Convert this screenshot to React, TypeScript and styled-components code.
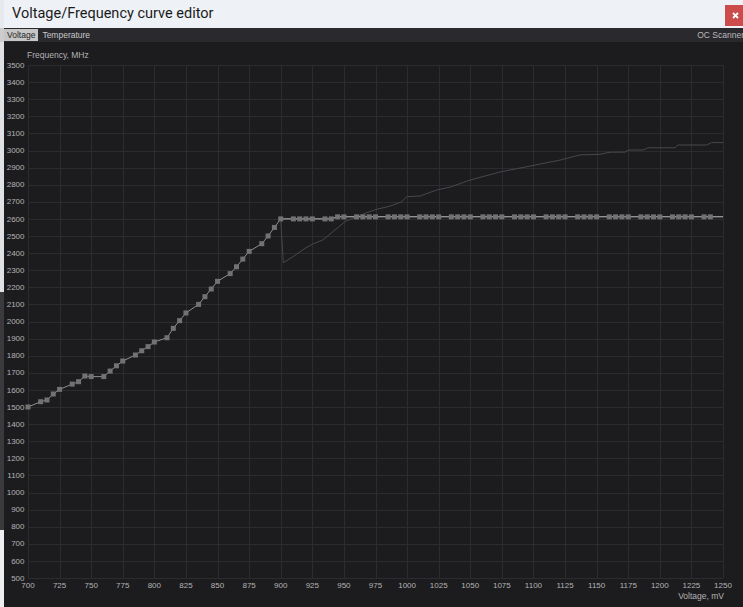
import React from 'react';
import styled, { createGlobalStyle } from 'styled-components';

const GlobalStyle = createGlobalStyle`
  html, body {
    margin: 0;
    padding: 0;
    background: #1c1c1f;
    overflow: hidden;
  }
  #root {
    width: 743px;
    height: 607px;
  }
`;

// ---- data ----------------------------------------------------------------

const VMIN = 700;
const VMAX = 1250;
const FMIN = 500;
const FMAX = 3500;

// plot box inside the svg
const PL = 24;
const PT = 5;
const PW = 695;
const PH = 513;

const sx = (v: number) => PL + ((v - VMIN) / (VMAX - VMIN)) * PW;
const sy = (f: number) => PT + ((FMAX - f) / (FMAX - FMIN)) * PH;
const crisp = (n: number) => Math.round(n) + 0.5;

const risingPoints: [number, number][] = [
  [700, 1500], [710, 1531], [715, 1541], [720, 1576], [725, 1603],
  [735, 1634], [740, 1648], [745, 1681], [750, 1678], [760, 1678],
  [765, 1710], [770, 1741], [775, 1769], [785, 1804], [790, 1829],
  [795, 1853], [800, 1880], [810, 1905], [815, 1960], [820, 2005],
  [825, 2050], [835, 2100], [840, 2145], [845, 2190], [850, 2235],
  [860, 2280], [865, 2320], [870, 2365], [875, 2410], [885, 2455],
  [890, 2500], [895, 2550], [900, 2600],
];

const flatPoints: [number, number][] = (() => {
  const pts: [number, number][] = [];
  for (let v = 910; v <= 1240; v += 5) {
    if (v % 25 === 5) continue;
    pts.push([v, v < 945 ? 2600 : 2612]);
  }
  return pts;
})();

const dimCurve: [number, number][] = [
  [900, 2600], [902, 2344], [909.7, 2379], [919.2, 2428], [925.5, 2453],
  [933.4, 2477], [941.3, 2525], [950.9, 2584], [957.2, 2604], [968, 2636],
  [976, 2656], [986.5, 2675], [995.7, 2700], [999.7, 2730], [1010.2, 2734],
  [1023.4, 2769], [1034, 2786], [1049.8, 2827], [1073.5, 2874],
  [1097.3, 2909], [1121, 2944], [1136.8, 2974], [1152.6, 2978],
  [1160.6, 2990], [1172.5, 2990], [1175, 3003], [1186.7, 3003],
  [1190.6, 3016], [1212, 3016], [1214.4, 3032], [1237, 3032],
  [1241, 3046], [1250, 3046],
];

const toPath = (pts: [number, number][]) =>
  pts.map(([v, f]) => `${sx(v).toFixed(1)},${sy(f).toFixed(1)}`).join(' ');

const freqTicks = Array.from({ length: 31 }, (_, i) => FMIN + i * 100);
const voltTicks = Array.from({ length: 23 }, (_, i) => VMIN + i * 25);

// ---- layout ----------------------------------------------------------------

const Screen = styled.div`
  display: flex;
  width: 743px;
  height: 607px;
  overflow: hidden;
`;

const BehindEdge = styled.div`
  width: 4px;
  flex-shrink: 0;
  background: linear-gradient(
    to bottom,
    #e6e9ed 0px,
    #e6e9ed 28px,
    #cdcdcd 28px,
    #cdcdcd 42px,
    #dfe1e4 42px,
    #dfe1e4 292px,
    #3a3a3d 292px,
    #3a3a3d 530px,
    #eceef0 530px
  );
`;

const Window = styled.div`
  flex: 1;
  min-width: 0;
  display: flex;
  flex-direction: column;
  background: #1c1c1f;
`;

const TitleBar = styled.div`
  height: 28px;
  flex-shrink: 0;
  display: flex;
  align-items: flex-start;
  justify-content: space-between;
  background: #eef1f5;
  padding-left: 8px;
`;

const Title = styled.div`
  font-family: Roboto, 'Liberation Sans', sans-serif;
  font-size: 14.5px;
  line-height: 27px;
  color: #1b1b1b;
`;

const CloseButton = styled.div`
  width: 21px;
  height: 21px;
  margin-top: 5px;
  margin-right: -3px;
  background: #cc4b4b;
  display: flex;
  align-items: center;
  justify-content: center;
`;

const TabBar = styled.div`
  height: 14px;
  flex-shrink: 0;
  display: flex;
  align-items: center;
  gap: 1px;
  background: #2a2a2e;
  font-family: 'Liberation Sans', Arial, sans-serif;
  font-size: 8.5px;
`;

const Tab = styled.div<{ $active?: boolean }>`
  height: 12px;
  line-height: 12px;
  padding: 0 3px;
  background: ${(p) => (p.$active ? '#c6c6c6' : 'transparent')};
  color: ${(p) => (p.$active ? '#1f1f1f' : '#c9c9c9')};
`;

const ScannerLink = styled.div`
  margin-left: auto;
  margin-right: -1px;
  white-space: nowrap;
  color: #b9b9b9;
  line-height: 12px;
`;

const ChartArea = styled.div`
  flex: 1;
  display: flex;
  flex-direction: column;
  font-family: 'Liberation Sans', Arial, sans-serif;
  color: #b3b3b3;
`;

const AxisTitle = styled.div<{ $align: 'left' | 'right' }>`
  font-size: 8.5px;
  line-height: 10px;
  height: 10px;
  text-align: ${(p) => p.$align};
  padding: ${(p) => (p.$align === 'left' ? '8px 0 0 23px' : '0 19px 0 0')};
`;

const ChartSvg = styled.svg`
  display: block;
  width: 739px;
  height: 531px;
  flex-shrink: 0;
`;

const CurveChart = () => (
  <ChartSvg viewBox="0 0 739 531">
    {freqTicks.map((f) => (
      <line
        key={`h${f}`}
        x1={PL}
        x2={PL + PW}
        y1={crisp(sy(f))}
        y2={crisp(sy(f))}
        stroke="#2c2c30"
        strokeWidth={1}
      />
    ))}
    {voltTicks.map((v) => (
      <line
        key={`v${v}`}
        x1={crisp(sx(v))}
        x2={crisp(sx(v))}
        y1={PT}
        y2={PT + PH}
        stroke="#2c2c30"
        strokeWidth={1}
      />
    ))}

    {freqTicks.map((f) => (
      <text
        key={`ft${f}`}
        x={20.5}
        y={sy(f) + 0.5}
        textAnchor="end"
        dominantBaseline="middle"
        fontFamily="'Liberation Sans', Arial, sans-serif"
        fontSize={8}
        fill="#b3b3b3"
      >
        {f}
      </text>
    ))}
    {voltTicks.map((v) => (
      <text
        key={`vt${v}`}
        x={sx(v)}
        y={PT + PH + 7.5}
        textAnchor="middle"
        dominantBaseline="middle"
        fontFamily="'Liberation Sans', Arial, sans-serif"
        fontSize={8}
        fill="#b3b3b3"
      >
        {v}
      </text>
    ))}

    <polyline points={toPath(dimCurve)} fill="none" stroke="#48484c" strokeWidth={1} />
    <polyline points={toPath(risingPoints)} fill="none" stroke="#8e8e8e" strokeWidth={1} />
    <polyline
      points={toPath([[900, 2600], [940, 2600], [945, 2612], [1250, 2612]])}
      fill="none"
      stroke="#c4c4c4"
      strokeWidth={1}
    />

    {[...risingPoints, ...flatPoints].map(([v, f]) => (
      <rect
        key={`p${v}`}
        x={sx(v) - 2.5}
        y={sy(f) - 2.5}
        width={5}
        height={5}
        fill="#727272"
      />
    ))}
  </ChartSvg>
);

export default function App() {
  return (
    <>
      <GlobalStyle />
      <Screen>
        <BehindEdge />
        <Window>
          <TitleBar>
            <Title>Voltage/Frequency curve editor</Title>
            <CloseButton>
              <svg width="7" height="7" viewBox="0 0 7 7">
                <path d="M1 1L6 6M6 1L1 6" stroke="#ffffff" strokeWidth="1.8" />
              </svg>
            </CloseButton>
          </TitleBar>
          <TabBar>
            <Tab $active>Voltage</Tab>
            <Tab>Temperature</Tab>
            <ScannerLink>OC Scanner</ScannerLink>
          </TabBar>
          <ChartArea>
            <AxisTitle $align="left">Frequency, MHz</AxisTitle>
            <CurveChart />
            <AxisTitle $align="right">Voltage, mV</AxisTitle>
          </ChartArea>
        </Window>
      </Screen>
    </>
  );
}
